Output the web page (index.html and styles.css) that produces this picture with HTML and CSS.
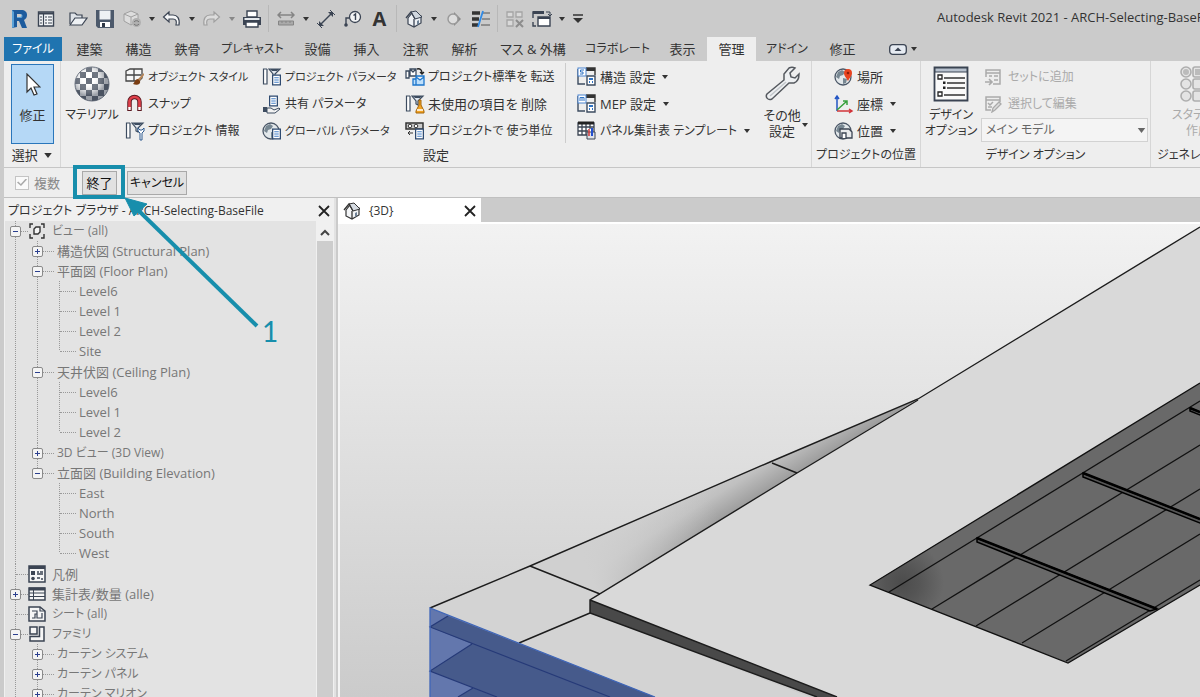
FILE: index.html
```html
<!DOCTYPE html>
<html lang="ja">
<head>
    <meta charset="UTF-8">
    <meta name="viewport" content="width=device-width, initial-scale=1.0">
    <title>Autodesk Revit 2021</title>
    <link rel="stylesheet" href="styles.css">
</head>
<body>
    <!-- shared icon shapes -->
    <svg class="sprite" width="0" height="0" aria-hidden="true">
        <symbol id="caret" viewBox="0 0 6 4"><path d="M0 0h6L3 4z" fill="currentColor"/></symbol>
        <symbol id="filter" viewBox="0 0 20 20">
            <path d="M5 2H1.500v15H5V2" fill="#fff" stroke="#3d4c60" stroke-width="1.200"/>
            <path d="M7 2h11l-5 5v4l-2-1V7z" fill="#dfe5ec" stroke="#3d4c60" stroke-width="1.200"/>
            <path d="M8 2h9l-2 2h-5z" fill="#3d4c60"/>
        </symbol>
        <symbol id="sheet" viewBox="0 0 10 12">
            <path d="M.7.7h8.600v10.600H.7z" fill="#fff" stroke="#2e4a70" stroke-width="1.400"/>
            <path d="M2.500 3.500h5M2.500 6h5M2.500 8.500h5" stroke="#2e6fc0"/>
        </symbol>
        <symbol id="globe" viewBox="0 0 20 20">
            <circle cx="9" cy="10" r="8" fill="#e3e8eb" stroke="#4a5666" stroke-width="1.300"/>
            <path d="M4 5l4-2 3 2-2 3-3 1-1 3-3-2zM9 11l4 1-1 4-3 1z" fill="#778792"/>
        </symbol>
        <symbol id="tmpl" viewBox="0 0 20 20">
            <path d="M1 2v15h7M1 8h8" fill="none" stroke="#3d4c60" stroke-width="1.400"/>
            <path d="M9 1h9v7" fill="none" stroke="#333" stroke-width="1.400"/>
            <path d="M9 1h9v3H9z" fill="#333"/>
            <rect x="1" y="1" width="8" height="8" fill="#fff" stroke="#4a84d0"/>
            <path d="M10 9h8v9h-8z" fill="#fff" stroke="#3d4c60" stroke-width="1.400"/>
            <path d="M12 12h4M12 15h1M15 15h1" stroke="#2e72c4" stroke-width="2"/>
        </symbol>
    </svg>

    <header class="titlebar">
        <div class="quick">
            <button class="qbtn" aria-label="Revit"><svg width="20" height="20" viewBox="0 0 20 20"><path fill="#1d5b9d" d="M3 1h9c4 0 6 2 6 5 0 2-1 4-3 5l3 8h-5l-3-7H8v6l-5 1z"/><path fill="#5ba2d8" d="M3 1l2 2v15l-2 1zM8 5h4c2 0 2 4 0 4H8z"/><path fill="#cbcbcb" d="M8 5h3c2 0 2 3 0 3H8z"/></svg></button>
            <button class="qbtn" aria-label="ホーム"><svg width="18" height="18" viewBox="0 0 18 18"><path d="M1.500 2h15v14h-15z" fill="#f4f6f8" stroke="#3b4453" stroke-width="1.400"/><path d="M2 3.500h14" stroke="#3b4453" stroke-width="2"/><path d="M6.500 4v12M3 7h2M3 10h2M3 13h2M8 7h2M8 10h2M8 13h2M11 7h4M11 10h4M11 13h4" stroke="#3b4453" stroke-width="1.200"/></svg></button>
            <button class="qbtn group" aria-label="開く"><svg width="20" height="18" viewBox="0 0 20 18"><path d="M2 14V3h5l2 2h5v3" fill="#dfe3e8" stroke="#3b4453" stroke-width="1.200"/><path d="M2 15l5-7h12l-5 7z" fill="#eef1f4" stroke="#3b4453" stroke-width="1.200"/></svg></button>
            <button class="qbtn" aria-label="保存"><svg width="20" height="20" viewBox="0 0 20 20"><path d="M1 1h18v18H3l-2-2z" fill="#4c596b"/><path d="M4.500 1.500h11v9h-11z" fill="#eef1f4"/><path d="M5 13h10v5H5z" fill="#fff"/><path d="M7 14h3v4H7z" fill="#2f3845"/></svg></button>
            <button class="qbtn" aria-label="同期"><svg width="20" height="20" viewBox="0 0 20 20"><g stroke="#a0a0a0" fill="#ddd"><path d="M2 5l7-3 7 3v7l-7 4-7-4z"/><path d="M2 5l7 3 7-3M9 8v8" fill="none"/></g><circle cx="14.500" cy="13.500" r="4.500" fill="#b0b0b0"/><path d="M12 13a3 3 0 0 1 5 0M17 15a3 3 0 0 1-5 0" stroke="#777" fill="none"/></svg></button>
            <button class="qdrop" aria-label="同期オプション"><svg width="6" height="4"><use href="#caret"/></svg></button>
            <button class="qbtn" aria-label="元に戻す"><svg width="19" height="18" viewBox="0 0 19 18"><path d="M7 2L1.500 7 7 12V9h4c3 0 4 2 3 6h3c1-7-2-10-6-10H7z" fill="#f6f7f8" stroke="#3b4453" stroke-width="1.200"/></svg></button>
            <button class="qdrop" aria-label="元に戻す履歴"><svg width="6" height="4"><use href="#caret"/></svg></button>
            <button class="qbtn" aria-label="やり直し"><svg width="19" height="18" viewBox="0 0 19 18"><path d="M12 2l5.500 5-5.500 5V9H8c-3 0-4 2-3 6H2C1 8 4 5 8 5h4z" fill="#dcdcdc" stroke="#a0a0a0" stroke-width="1.200"/></svg></button>
            <button class="qdrop dim" aria-label="やり直し履歴"><svg width="6" height="4"><use href="#caret"/></svg></button>
            <button class="qbtn" aria-label="印刷"><svg width="20" height="18" viewBox="0 0 20 18"><path d="M5 1h10v6H5z" fill="#fff" stroke="#3b4453" stroke-width="1.400"/><path d="M1 7h18v8H1z" fill="#3b4453"/><path d="M2.500 9h15" stroke="#e4e8ec" stroke-width="2"/><path d="M4 12h12v5H4z" fill="#fff" stroke="#3b4453" stroke-width="1.400"/></svg></button>
            <span class="qsep"></span>
            <button class="qbtn" aria-label="計測"><svg width="18" height="16" viewBox="0 0 18 16"><path d="M1 4h16M4 1L1 4l3 3M14 1l3 3-3 3" stroke="#858585" stroke-width="1.500" fill="none"/><path d="M1.500 10h15v4h-15zM5 10v2M9 10v2M13 10v2" stroke="#858585" fill="#aaa"/></svg></button>
            <button class="qdrop" aria-label="計測オプション"><svg width="6" height="4"><use href="#caret"/></svg></button>
            <button class="qbtn" aria-label="平行寸法"><svg width="20" height="20" viewBox="0 0 20 20"><path d="M4 16L16 4" stroke="#3b4453" stroke-width="1.400"/><path d="M3 12v5h5zM17 8V3h-5z" fill="#3b4453"/><path d="M1 14l5 5M14 1l5 5" stroke="#3b4453"/></svg></button>
            <button class="qbtn" aria-label="タグ"><svg width="20" height="18" viewBox="0 0 20 18"><circle cx="12" cy="7" r="5.500" fill="#f3f4f5" stroke="#3b4453" stroke-width="1.300"/><path d="M6.500 8H3v7M10.500 5.500L12.500 4v6" fill="none" stroke="#3b4453" stroke-width="1.400"/><circle cx="3" cy="15" r="1.800" fill="#3b4453"/></svg></button>
            <button class="qbtn qtext" aria-label="文字">A</button>
            <span class="qsep"></span>
            <button class="qbtn" aria-label="既定の3Dビュー"><svg width="18" height="18" viewBox="0 0 18 18"><path d="M3 8l4-5 9 3v7l-7 4-6-3z" fill="#eef1f5" stroke="#3b4453" stroke-width="1.200"/><path d="M6 2l5-1 6 6-7 2z" fill="#cfd6de" stroke="#3b4453"/><path d="M1 8l5-6 4 7M9 17V9" fill="none" stroke="#3b4453" stroke-width="1.300"/><path d="M12 11l2-1v4l-2 1z" fill="#6f8296"/></svg></button>
            <button class="qdrop" aria-label="3Dビューオプション"><svg width="6" height="4"><use href="#caret"/></svg></button>
            <button class="qbtn" aria-label="断面"><svg width="16" height="16" viewBox="0 0 16 16"><path d="M8 1l7 7-7 7z" fill="#8a8a8a"/><circle cx="7" cy="8" r="5" fill="#ddd" stroke="#999" stroke-width="1.400"/></svg></button>
            <button class="qbtn" aria-label="細線"><svg width="20" height="18" viewBox="0 0 20 18"><path d="M1 3h8M1 9h7M1 15h6" stroke="#333" stroke-width="3.500"/><path d="M12 3h7M11 9h8M10 15h9" stroke="#555"/><path d="M12 1L7 17" stroke="#2f8ae6" stroke-width="1.800"/></svg></button>
            <span class="qsep"></span>
            <button class="qbtn" aria-label="非アクティブを閉じる"><svg width="18" height="18" viewBox="0 0 18 18"><path d="M1 2h6v5H1zM10 2h6v5h-6zM1 10h6v6H1z" fill="#d9d9d9" stroke="#a5a5a5" stroke-width="1.300"/><path d="M10 10l7 7M17 10l-7 7" stroke="#8d8d8d" stroke-width="2"/></svg></button>
            <button class="qbtn" aria-label="ウィンドウを切り替え"><svg width="20" height="18" viewBox="0 0 20 18"><path d="M1 8V2h11M4 16H1v-4" fill="none" stroke="#3b4453" stroke-width="1.400"/><path d="M1 1h11v3H1z" fill="#3b4453"/><path d="M6 7h12v9H6z" fill="#fff" stroke="#3b4453" stroke-width="1.400"/><path d="M6 8h12" stroke="#3b4453" stroke-width="2"/><path d="M14 2h4v4M16 4l2 2 2-2" stroke="#3b4453" fill="none"/></svg></button>
            <button class="qdrop" aria-label="ウィンドウ一覧"><svg width="6" height="4"><use href="#caret"/></svg></button>
            <button class="qcustom" aria-label="カスタマイズ"><svg width="10" height="9" viewBox="0 0 10 9"><path d="M0 1h10" stroke="#333" stroke-width="1.500"/><path d="M0 4h10L5 9z" fill="#333"/></svg></button>
        </div>
        <div class="app-title">Autodesk Revit 2021 - ARCH-Selecting-BaseFile</div>
    </header>

    <nav class="tabs">
        <button class="tab file">ファイル</button>
        <button class="tab">建築</button>
        <button class="tab">構造</button>
        <button class="tab">鉄骨</button>
        <button class="tab wide">プレキャスト</button>
        <button class="tab">設備</button>
        <button class="tab">挿入</button>
        <button class="tab">注釈</button>
        <button class="tab">解析</button>
        <button class="tab wider">マス &amp; 外構</button>
        <button class="tab wide">コラボレート</button>
        <button class="tab">表示</button>
        <button class="tab active">管理</button>
        <button class="tab mid">アドイン</button>
        <button class="tab">修正</button>
        <button class="ribbon-toggle" aria-label="リボンを最小化">
            <svg width="18" height="11" viewBox="0 0 18 11"><rect x=".7" y=".7" width="16.600" height="9.600" rx="3" fill="#e6ebf2" stroke="#3b4453" stroke-width="1.300"/><path d="M5.500 7L9 3.500 12.500 7z" fill="#3b4453"/></svg>
            <svg width="6" height="4"><use href="#caret"/></svg>
        </button>
    </nav>

    <section class="ribbon">
        <div class="panel select-panel">
            <div class="panel-body">
                <button class="modify">
                    <svg width="16" height="24" viewBox="0 0 16 24"><path d="M2 1v18l4-4 3 7 3-1-3-7h6z" fill="#fff" stroke="#333" stroke-width="1.200"/></svg>
                    <span>修正</span>
                </button>
            </div>
            <div class="panel-title">選択 <svg width="8" height="5"><use href="#caret"/></svg></div>
        </div>

        <div class="panel settings-panel">
            <div class="panel-body settings-grid">
                <button class="big">
                    <svg width="36" height="36" viewBox="0 0 36 36">
                        <defs>
                            <pattern id="check" width="12" height="12" patternUnits="userSpaceOnUse"><path fill="#fff" d="M0 0h12v12H0z"/><path fill="#59616e" d="M0 0h6v6H0zM6 6h6v6H6z"/></pattern>
                            <radialGradient id="shade" cx=".4" cy=".35"><stop offset=".3" stop-color="#fff" stop-opacity=".1"/><stop offset="1" stop-color="#3b4453" stop-opacity=".5"/></radialGradient>
                        </defs>
                        <circle cx="18" cy="18" r="17" fill="url(#check)" stroke="#6b7380"/>
                        <circle cx="18" cy="18" r="17" fill="url(#shade)"/>
                    </svg>
                    <span>マテリアル</span>
                </button>
                <div class="stack">
                    <button class="cmd long"><svg width="20" height="20" viewBox="0 0 20 20"><path d="M1 4l4-2h12v9l-3 3H1zM1 8h15M9 2v12" fill="#f7f7f7" stroke="#444" stroke-width="1.300"/><path d="M19 6l-7 7 2 2 5-7z" fill="#b98555"/><path d="M13 12c-3 0-3 3-5 5 4 2 8 0 7-3z" fill="#7a3d12"/></svg>オブジェクト スタイル</button>
                    <button class="cmd"><svg width="20" height="20" viewBox="0 0 20 20"><path d="M4.500 17V8a5 5 0 0 1 10 0v9" fill="none" stroke="#5c1a22" stroke-width="4.500"/><path d="M4.500 14V8a5 5 0 0 1 10 0v6" fill="none" stroke="#e0404b" stroke-width="2.600"/><path d="M3.300 13h2.400v3H3.300zM13.300 13h2.400v3h-2.400z" fill="#fff"/></svg>スナップ</button>
                    <button class="cmd"><svg width="20" height="20" viewBox="0 0 20 20"><use href="#filter"/><path d="M15 19v-7l-2-2V7l2 2h2l2-2v3l-2 2v7z" fill="#fff" stroke="#2e5a8f"/></svg>プロジェクト 情報</button>
                </div>
                <div class="stack">
                    <button class="cmd long"><svg width="20" height="20" viewBox="0 0 20 20"><use href="#filter"/><use href="#sheet" x="10" y="7" width="9" height="12"/></svg>プロジェクト パラメータ</button>
                    <button class="cmd"><svg width="20" height="20" viewBox="0 0 20 20"><use href="#sheet" x="7" y="1" width="9" height="12"/><path d="M1 13h4v5H1z" fill="#3d4c60"/><path d="M5 14h4l3 2 5-2 1 1-5 4H5z" fill="#f3f3f3" stroke="#3d4c60"/></svg>共有 パラメータ</button>
                    <button class="cmd long"><svg width="20" height="20" viewBox="0 0 20 20"><use href="#globe"/><use href="#sheet" x="10" y="7" width="9" height="12"/></svg>グローバル パラメータ</button>
                </div>
                <div class="stack ruled">
                    <button class="cmd"><svg width="20" height="20" viewBox="0 0 20 20"><path d="M1 4h3v7H1zM5 2h6v7H5zM5 2l3 3 3-3" fill="#fff" stroke="#3d4c60" stroke-width="1.300"/><path d="M12 2c3-1 5 1 5 4M15 5l2 2 2-2" fill="none" stroke="#222" stroke-width="1.400"/><path d="M8 12h3v6H8zM11 9h8v9h-8zM11 10l4 3 4-3" fill="#bfe0fb" stroke="#1d76cc" stroke-width="1.300"/></svg>プロジェクト標準を 転送</button>
                    <button class="cmd kanji"><svg width="20" height="20" viewBox="0 0 20 20"><use href="#filter"/><path d="M14 6h2v5l3 6v2h-8v-2l3-6z" fill="#f2a324" stroke="#a5660b"/><path d="M12 16h6" stroke="#fff" stroke-width="1.500"/></svg>未使用の項目を 削除</button>
                    <button class="cmd"><svg width="20" height="20" viewBox="0 0 20 20"><path d="M1 2h17v6H1z" fill="#ccc" stroke="#333" stroke-width="1.500"/><circle cx="5" cy="5" r="1.800" fill="#fff" stroke="#333"/><circle cx="11" cy="5" r="1.800" fill="#fff" stroke="#333"/><path d="M3 12h5M5 10l-2 2 2 2" stroke="#333" fill="none"/><use href="#sheet" x="10" y="7" width="9" height="12"/></svg>プロジェクトで 使う単位</button>
                </div>
                <div class="stack setup">
                    <button class="cmd kanji"><svg width="20" height="20" viewBox="0 0 20 20"><use href="#tmpl"/><path d="M7 3H3.500v2H6v2H3" fill="none" stroke="#2e72c4"/></svg>構造 設定<svg class="more" width="6" height="4"><use href="#caret"/></svg></button>
                    <button class="cmd kanji"><svg width="20" height="20" viewBox="0 0 20 20"><use href="#tmpl"/><path d="M3 7V3.500h4V7M5 3.500V7" fill="none" stroke="#2e72c4"/></svg>MEP 設定<svg class="more" width="6" height="4"><use href="#caret"/></svg></button>
                    <button class="cmd"><svg width="20" height="20" viewBox="0 0 20 20"><path d="M1 2h16v12H1zM1 6h16M1 10h10M5 2v12M9 2v12M13 2v6" fill="#fff" stroke="#3b4453" stroke-width="1.300"/><path d="M1 2h16" stroke="#222" stroke-width="3"/><path d="M10 11h8v7h-8z" fill="#dfe3ea" stroke="#3b4453"/><path d="M12 15V8" stroke="#c33" stroke-width="1.500"/><path d="M15 15V7" stroke="#2350d0" stroke-width="2"/></svg>パネル集計表 テンプレート<svg class="more" width="6" height="4"><use href="#caret"/></svg></button>
                </div>
                <button class="big">
                    <svg width="36" height="36" viewBox="0 0 36 36"><path d="M20 14l0-6 5-6c2-1 4-1 6 0l-5 5 1 4 4 1 4-4c0 5-2 8-5 9l-5 0L8 33c-4 2-7-2-5-5z" fill="#eef0f2" stroke="#55595f" stroke-width="1.500"/><path d="M6 30L22 16" stroke="#c2c6ca" stroke-width="1.500"/></svg>
                    <span class="kanji">その他<br>設定</span>
                    <svg class="corner" width="6" height="4"><use href="#caret"/></svg>
                </button>
            </div>
            <div class="panel-title kanji">設定</div>
        </div>

        <div class="panel place-panel">
            <div class="panel-body">
                <div class="stack">
                    <button class="cmd kanji"><svg width="20" height="20" viewBox="0 0 20 20"><use href="#globe"/><path d="M14 14c-2-4-4-5-4-8a4 4 0 0 1 8 0c0 3-2 4-4 8z" fill="#e8431f"/><circle cx="14" cy="6" r="1.300" fill="#8d1c08"/></svg>場所</button>
                    <button class="cmd kanji"><svg width="20" height="20" viewBox="0 0 20 20"><path d="M3 17V3M1 5l2-3 2 3" stroke="#2255c4" stroke-width="1.500" fill="none"/><path d="M3 17h14M15 15l3 2-3 2" stroke="#d2343a" stroke-width="1.500" fill="none"/><path d="M3 16L13 7M9 7h4v4" stroke="#38a03c" stroke-width="1.500" fill="none"/></svg>座標<svg class="more" width="6" height="4"><use href="#caret"/></svg></button>
                    <button class="cmd kanji"><svg width="20" height="20" viewBox="0 0 20 20"><use href="#globe"/><path d="M6 17V8h9l3 3v6z" fill="#e8eaec" stroke="#3b4453" stroke-width="1.300"/><path d="M8 17v-5h4v5" fill="#fff" stroke="#3b4453" stroke-width="1.300"/></svg>位置<svg class="more" width="6" height="4"><use href="#caret"/></svg></button>
                </div>
            </div>
            <div class="panel-title">プロジェクトの位置</div>
        </div>

        <div class="panel design-panel">
            <div class="panel-body">
                <button class="big">
                    <svg width="36" height="36" viewBox="0 0 36 36"><path d="M1.500 1.500h33v33h-33z" fill="#fafafa" stroke="#3b4453" stroke-width="1.800"/><path d="M2 2h32v4H2z" fill="#b8c2cf" stroke="#3b4453"/><path d="M5 9h4v4H5zM5 26h4v4H5z" fill="#fff" stroke="#222" stroke-width="1.300"/><path d="M11 12h21M14 17h18M14 22h18M11 29h21" stroke="#333" stroke-width="1.400"/><path d="M10 15.500h2.500v2.500H10zM10 20.500h2.500v2.500H10z" fill="#222"/></svg>
                    <span>デザイン<br>オプション</span>
                </button>
                <div class="stack design-list">
                    <button class="cmd" disabled><svg width="18" height="18" viewBox="0 0 18 18"><path d="M2 9V2h14v14H9M2 5h14M5 8h3M10 8h4M10 12h4" fill="none" stroke="#aaa" stroke-width="1.500"/><path d="M1 14h6M5 11l3 3-3 3" fill="none" stroke="#aaa" stroke-width="1.600"/></svg>セットに追加</button>
                    <button class="cmd" disabled><svg width="18" height="18" viewBox="0 0 18 18"><path d="M7 15H2V2h14v5M2 5h14M4 8l2 2 3-3M4 12h4" fill="none" stroke="#aaa" stroke-width="1.500"/><path d="M8 17l1-4 6-6 2 2-6 6z" fill="#ddd" stroke="#aaa" stroke-width="1.300"/></svg>選択して編集</button>
                    <div class="combo">
                        <select aria-label="デザイン オプション"><option>メイン モデル</option></select>
                        <svg width="9" height="5"><use href="#caret"/></svg>
                    </div>
                </div>
            </div>
            <div class="panel-title">デザイン オプション</div>
        </div>

        <div class="panel gen-panel">
            <div class="panel-body">
                <button class="big" disabled>
                    <svg width="36" height="36" viewBox="0 0 36 36"><g fill="#e4e4e4" stroke="#aeaeae" stroke-width="1.600"><circle cx="6" cy="6" r="5"/><rect x="13" y="1" width="10" height="10" rx="2"/><circle cx="30" cy="6" r="5"/><circle cx="6" cy="18" r="5"/><rect x="13" y="13" width="10" height="10" rx="2"/><circle cx="30" cy="18" r="5"/><circle cx="6" cy="30" r="5"/><rect x="13" y="25" width="10" height="10" rx="2"/><circle cx="30" cy="30" r="5"/></g><circle cx="6" cy="6" r="3" fill="#bbb"/><path d="M15 3h6v6h-6z" fill="#bbb"/></svg>
                    <span>スタディの<br>作成</span>
                </button>
            </div>
            <div class="panel-title">ジェネレーティブ デザイン</div>
        </div>
    </section>

    <section class="options">
        <label class="multi"><input type="checkbox" checked disabled>複数</label>
        <button class="opt">終了</button>
        <button class="opt cancel">キャンセル</button>
        <!-- step callout for the finish button -->
        <svg class="callout" width="220" height="190" viewBox="0 0 220 190">
            <rect x="5" y="3" width="48" height="30" fill="none" stroke="#178eac" stroke-width="4"/>
            <path d="M69 47L187 162" stroke="#178eac" stroke-width="4"/>
            <path d="M55 34l9 18 13-12z" fill="#178eac" stroke="#178eac"/>
            <text x="192" y="178">1</text>
        </svg>
    </section>

    <main class="workspace">
        <aside class="browser">
            <div class="browser-head">
                <h2>プロジェクト ブラウザ - ARCH-Selecting-BaseFile</h2>
                <button class="close" aria-label="閉じる"><svg width="12" height="12" viewBox="0 0 12 12"><path d="M1 1l10 10M11 1L1 11" stroke="#222" stroke-width="1.800"/></svg></button>
            </div>
            <div class="browser-body">
                <ul class="tree">
                    <li>
                        <div class="row top kana"><button class="tg" aria-label="折りたたむ"></button><i></i><svg width="18" height="18" viewBox="0 0 18 18"><path d="M5 2H2v4M13 2h3v4M5 16H2v-4M13 16h3v-4" fill="none" stroke="#333" stroke-width="1.400"/><path d="M6 7l2-2h4v5l-2 2H6z" fill="#f6f6f6" stroke="#333" stroke-width="1.400"/></svg>ビュー (all)</div>
                        <ul>
                            <li><div class="row"><button class="tg plus" aria-label="展開"></button><i></i>構造伏図 (Structural Plan)</div></li>
                            <li>
                                <div class="row"><button class="tg" aria-label="折りたたむ"></button><i></i>平面図 (Floor Plan)</div>
                                <ul>
                                    <li><div class="row leaf"><i></i>Level6</div></li>
                                    <li><div class="row leaf"><i></i>Level 1</div></li>
                                    <li><div class="row leaf"><i></i>Level 2</div></li>
                                    <li class="last"><div class="row leaf"><i></i>Site</div></li>
                                </ul>
                            </li>
                            <li>
                                <div class="row"><button class="tg" aria-label="折りたたむ"></button><i></i>天井伏図 (Ceiling Plan)</div>
                                <ul>
                                    <li><div class="row leaf"><i></i>Level6</div></li>
                                    <li><div class="row leaf"><i></i>Level 1</div></li>
                                    <li class="last"><div class="row leaf"><i></i>Level 2</div></li>
                                </ul>
                            </li>
                            <li><div class="row kana"><button class="tg plus" aria-label="展開"></button><i></i>3D ビュー (3D View)</div></li>
                            <li class="last">
                                <div class="row"><button class="tg" aria-label="折りたたむ"></button><i></i>立面図 (Building Elevation)</div>
                                <ul>
                                    <li><div class="row leaf"><i></i>East</div></li>
                                    <li><div class="row leaf"><i></i>North</div></li>
                                    <li><div class="row leaf"><i></i>South</div></li>
                                    <li class="last"><div class="row leaf"><i></i>West</div></li>
                                </ul>
                            </li>
                        </ul>
                    </li>
                    <li><div class="row top leaf"><i></i><svg width="18" height="18" viewBox="0 0 18 18"><path d="M1 1h16v16H1z" fill="#f6f6f6" stroke="#3b4453" stroke-width="1.500"/><path d="M1 2.500h16" stroke="#3b4453" stroke-width="3"/><path d="M3 6h4v4H3z" fill="#3b4453"/><circle cx="5" cy="13.500" r="1.800" fill="#3b4453"/><path d="M9 7h2M12 7h3M9 9h6M9 13h3M13 14h2" stroke="#3b4453" stroke-width="1.300"/></svg>凡例</div></li>
                    <li><div class="row top"><button class="tg plus" aria-label="展開"></button><i></i><svg width="18" height="18" viewBox="0 0 18 18"><path d="M1 3h16v12H1z" fill="#f6f6f6" stroke="#3b4453" stroke-width="1.500"/><path d="M1 4h16" stroke="#3b4453" stroke-width="3"/><path d="M1 8h16M1 11.500h16M5.500 5v10" stroke="#3b4453"/></svg>集計表/数量 (alle)</div></li>
                    <li><div class="row top leaf kana"><i></i><svg width="18" height="18" viewBox="0 0 18 18"><path d="M1 2h11l5 4v10H1z" fill="#f6f6f6" stroke="#3b4453" stroke-width="1.500"/><path d="M12 2v4h5M4 6h5v3H7v4H4M9 9v4h5V8" fill="none" stroke="#3b4453" stroke-width="1.200"/></svg>シート (all)</div></li>
                    <li>
                        <div class="row top kana"><button class="tg" aria-label="折りたたむ"></button><i></i><svg width="18" height="18" viewBox="0 0 18 18"><path d="M2 2h7v7H2zM11.500 2H16v14H2v-4.500h9.500z" fill="#f6f6f6" stroke="#3b4453" stroke-width="1.500"/></svg>ファミリ</div>
                        <ul>
                            <li><div class="row kana"><button class="tg plus" aria-label="展開"></button><i></i>カーテン システム</div></li>
                            <li><div class="row kana"><button class="tg plus" aria-label="展開"></button><i></i>カーテン パネル</div></li>
                            <li><div class="row kana"><button class="tg plus" aria-label="展開"></button><i></i>カーテン マリオン</div></li>
                        </ul>
                    </li>
                </ul>
                <div class="scroll">
                    <button class="scroll-up" aria-label="上へ"><svg width="10" height="7" viewBox="0 0 10 7"><path d="M1 6l4-4 4 4" fill="none" stroke="#444" stroke-width="2"/></svg></button>
                    <div class="thumb"></div>
                </div>
            </div>
        </aside>

        <section class="view">
            <div class="doc-tabs">
                <div class="doc-tab">
                    <svg width="18" height="18" viewBox="0 0 18 18"><path d="M3 8l4-5 9 3v7l-7 4-6-3z" fill="#f3f5f7" stroke="#333" stroke-width="1.200"/><path d="M6 2l5-1 6 6-7 2z" fill="#d5dbe2" stroke="#333"/><path d="M1 8l5-6 4 7M9 17V9" fill="none" stroke="#333" stroke-width="1.300"/><path d="M12 11l2-1v4l-2 1z" fill="#6f8296"/></svg>
                    <span>{3D}</span>
                    <button class="close" aria-label="閉じる"><svg width="12" height="12" viewBox="0 0 12 12"><path d="M1 1l10 10M11 1L1 11" stroke="#222" stroke-width="1.800"/></svg></button>
                </div>
            </div>
            <svg class="model" viewBox="340 224 860 473" preserveAspectRatio="xMinYMin slice" role="img" aria-label="3D ビュー">
                <defs>
                    <linearGradient id="curve" gradientUnits="userSpaceOnUse" x1="645" y1="512" x2="669" y2="551">
                        <stop offset="0" stop-color="#cecece"/><stop offset=".5" stop-color="#c0c0c0"/><stop offset="1" stop-color="#9e9e9e"/>
                    </linearGradient>
                    <linearGradient id="fade" gradientUnits="userSpaceOnUse" x1="590" y1="575" x2="720" y2="520">
                        <stop offset="0" stop-color="#d0d0d0"/><stop offset="1" stop-color="#d0d0d0" stop-opacity="0"/>
                    </linearGradient>
                    <radialGradient id="pit" gradientUnits="userSpaceOnUse" cx="902" cy="583" r="42">
                        <stop offset="0" stop-color="#4c4c4c"/><stop offset=".4" stop-color="#555"/><stop offset="1" stop-color="#696969"/>
                    </radialGradient>
                </defs>
                <path d="M430 608L530 566L600 594L590 600V613L870 720H655z" fill="#d3d3d3"/>
                <path d="M530 566L770 462L918 399L797 473L600 594z" fill="url(#curve)"/>
                <path d="M530 566L770 462L918 399L797 473L600 594z" fill="url(#fade)"/>
                <path d="M590 600L918 400L1200 227V697H837z" fill="#d9d9d9"/>
                <path d="M590 600L837 697H817L590 613z" fill="#494949"/>
                <g fill="none" stroke="#1c1c1c" stroke-width="1.400">
                    <path d="M430 608L530 566L770 462L918 399L1200 227"/>
                    <path d="M918 400L797 473L590 600V613L817 697M590 600L837 697"/>
                    <path d="M530 566L600 594M772 463L797 473M519 643L590 613"/>
                </g>
                <path d="M430 608L655 697H430z" fill="#6377ad"/>
                <path d="M430 627L448 616L655 697H610L472 644zM430 671L472 644L610 697H497zM458 697L473 688L497 697z" fill="#465a8b"/>
                <path d="M448 616L430 627L610 697M472 644L430 671L497 697M473 688L458 697" fill="none" stroke="#263a78" stroke-width="1.200"/>
                <path d="M430 697V608L655 697" fill="none" stroke="#3f66b8" stroke-width="1.300"/>
                <path d="M870 585L1200 383V585L1068 663z" fill="#696969"/>
                <path d="M870 585L950 536V616z" fill="url(#pit)"/>
                <g fill="none" stroke="#111" stroke-width="1.300">
                    <path d="M1200 383L870 585L1068 663L1200 585M1066 661L1200 580"/>
                    <path d="M889 592L1200 401M932 609L1200 445M976 626L1200 489M1022 643L1200 534"/>
                </g>
                <g fill="#555" stroke="#000" stroke-width="1.500">
                    <path d="M977 542V538L1157 609L1150 611z"/>
                    <path d="M1083 477V473L1210 523V527z"/>
                    <path d="M1190 411V408L1210 416V419z"/>
                </g>
                <path d="M977 538L1157 609M1083 473L1200 519M1190 408L1200 412" stroke="#000" stroke-width="2.500"/>
            </svg>
        </section>
    </main>
</body>
</html>
```
FILE: styles.css
```css
* {
    box-sizing: border-box;
}
body {
    margin: 0;
    height: 100vh;
    overflow: hidden;
    display: flex;
    flex-direction: column;
    background: #cbcbcb;
    color: #333;
    font-family: "Open Sans", "Noto Sans CJK JP", sans-serif;
    font-size: 13px;
    line-height: 16px;
    font-feature-settings: "palt";
}
button, select {
    font: inherit;
    font-feature-settings: inherit;
    color: inherit;
    background: none;
    border: 0;
    padding: 0;
    margin: 0;
    white-space: nowrap;
}
svg {
    flex: none;
}
.sprite {
    position: absolute;
}

/* title bar */
.titlebar {
    display: flex;
    height: 37px;
    flex: none;
    padding-left: 5px;
    overflow: hidden;
}
.quick {
    display: flex;
    align-items: center;
    flex: none;
    width: 932px;
}
.qbtn, .qdrop, .qcustom {
    display: flex;
    align-items: center;
    justify-content: center;
    height: 27px;
    width: 27px;
}
.qdrop {
    width: 13px;
}
.qcustom {
    width: 20px;
}
.dim {
    color: #888;
}
.group {
    margin-left: 5px;
}
.qtext {
    font-size: 20px;
    font-weight: 700;
}
.qsep {
    width: 1px;
    height: 27px;
    margin: 0 3px;
    background: #b8b8b8;
}
.app-title {
    white-space: nowrap;
    padding-top: 9px;
}

/* ribbon tabs */
.tabs {
    display: flex;
    flex: none;
    height: 24px;
    padding-left: 4px;
}
.tab {
    flex: none;
    width: 49px;
}
.file {
    width: 58px;
    margin-right: 3px;
    background: #1f74b0;
    color: #fff;
    font-size: 12px;
}
.mid {
    width: 62px;
    font-size: 12px;
}
.wide {
    width: 81px;
    font-size: 12px;
}
.wider {
    width: 88px;
}
.active {
    background: #eee;
}
.ribbon-toggle {
    display: flex;
    align-items: center;
    gap: 4px;
    margin-left: 22px;
}

/* ribbon */
.ribbon {
    display: flex;
    flex: none;
    height: 107px;
    margin-left: 4px;
    background: #eee;
    border-bottom: 1px solid #c6c6c6;
    overflow: hidden;
    font-size: 12px;
}
.kanji {
    font-size: 13px;
}
.long {
    font-size: 11px;
}
.panel {
    flex: none;
    display: flex;
    flex-direction: column;
    border-right: 1px solid #d6d6d6;
}
.panel-body {
    display: flex;
    height: 83px;
    padding-top: 2px;
}
.panel-title {
    text-align: center;
    line-height: 22px;
    white-space: nowrap;
}
.select-panel {
    width: 57px;
    font-size: 13px;
}
.select-panel .panel-body {
    padding-left: 7px;
}
.modify {
    width: 43px;
    height: 80px;
    margin-top: 1px;
    display: flex;
    flex-direction: column;
    align-items: center;
    gap: 10px;
    padding-top: 8px;
    background: #b5d8f6;
    border: 1px solid #2a76bb;
}
.select-panel .panel-title svg {
    margin-left: 3px;
    vertical-align: 2px;
}
.settings-panel {
    width: 751px;
}
.settings-grid {
    display: grid;
    grid-template-columns: 60px 137px 143px 161px 189px 54px;
    padding-left: 4px;
}
.big {
    display: flex;
    flex-direction: column;
    align-items: center;
    gap: 5px;
    width: 54px;
    padding-top: 3px;
    position: relative;
}
.corner {
    position: absolute;
    right: 1px;
    top: 60px;
}
.cmd {
    display: flex;
    align-items: center;
    gap: 3px;
    height: 27px;
}
.more {
    margin-left: 4px;
}
.ruled {
    height: 80px;
    border-right: 1px solid #ccc;
}
.setup {
    padding-left: 11px;
}
.place-panel {
    width: 109px;
}
.place-panel .panel-body {
    padding-left: 22px;
}
.design-panel {
    width: 230px;
}
.design-panel .panel-body {
    padding-left: 3px;
    gap: 3px;
}
.design-list {
    width: 167px;
}
.design-list .cmd {
    padding-left: 3px;
    gap: 6px;
}
.cmd:disabled, .big:disabled {
    color: #aaa;
}
.combo {
    display: grid;
    align-items: center;
    padding-top: 1px;
    color: #666;
}
.combo select {
    grid-area: 1 / 1;
    appearance: none;
    height: 24px;
    padding-left: 4px;
    border: 1px solid #d2d2d2;
    background: #f4f4f4;
}
.combo svg {
    grid-area: 1 / 1;
    justify-self: end;
    margin-right: 2px;
    pointer-events: none;
}
.gen-panel {
    width: 150px;
}
.gen-panel .panel-body {
    padding-left: 20px;
}
.gen-panel .panel-title {
    text-align: left;
    padding-left: 6px;
}

/* option bar */
.options {
    display: flex;
    align-items: center;
    flex: none;
    height: 30px;
    margin-left: 4px;
    padding-left: 11px;
    background: #eee;
    border-bottom: 1px solid #c0c0c0;
    position: relative;
}
.multi {
    display: flex;
    align-items: center;
    gap: 5px;
    width: 67px;
    color: #888;
}
.multi input {
    appearance: none;
    display: grid;
    place-items: center;
    width: 14px;
    height: 14px;
    margin: 0;
    background: #fafafa;
    border: 1px solid #c4c4c4;
}
.multi input:checked::before {
    content: "";
    width: 10px;
    height: 8px;
    background: #aaa;
    clip-path: polygon(0 50%, 12% 38%, 38% 68%, 88% 0, 100% 12%, 40% 95%);
}
.opt {
    width: 35px;
    height: 24px;
    background: #e1e1e1;
    border: 1px solid #a9a9a9;
    color: #111;
}
.cancel {
    width: 60px;
    margin-left: 10px;
    font-size: 12px;
}
.callout {
    position: absolute;
    left: 66px;
    top: -4px;
    z-index: 2;
    pointer-events: none;
}
.callout text {
    font: 28px Lato, sans-serif;
    fill: #178eac;
}

/* project browser */
.workspace {
    flex: 1;
    min-height: 0;
    display: flex;
    margin-left: 4px;
}
.browser {
    flex: none;
    width: 332px;
    display: flex;
    flex-direction: column;
    background: #f0f0f0;
    border-right: 2px solid #e2e2e2;
}
.browser-head {
    display: flex;
    justify-content: space-between;
    align-items: center;
    flex: none;
    height: 23px;
    padding: 2px 4px 0;
}
.browser-head h2 {
    margin: 0;
    font-size: 12px;
    font-weight: 400;
    white-space: nowrap;
}
.close {
    display: flex;
    padding: 0;
}
.browser-body {
    flex: 1;
    min-height: 0;
    display: flex;
    overflow: hidden;
}
.tree, .tree ul {
    list-style: none;
    margin: 0;
    padding: 0;
}
.tree {
    flex: 1;
    margin-left: 1px;
    background: #e3e3e3;
    color: #777;
}
.tree ul {
    margin-left: 22px;
}
.tree ul ul {
    padding-bottom: 1px;
}
.tree li {
    background: repeating-linear-gradient(#999 0 1px, transparent 1px 2px) 10px 0 / 1px 100% no-repeat;
}
.tree li.last {
    background-size: 1px 10px;
}
.row {
    display: flex;
    align-items: center;
    height: 20px;
    padding-left: 5px;
    white-space: nowrap;
}
.kana {
    font-size: 12px;
}
.row i {
    width: 11px;
    margin-right: 3px;
    border-top: 1px dotted #999;
}
.row.leaf i {
    width: 16px;
    margin-left: 6px;
}
.row.top i {
    width: 7px;
    margin-right: 0;
}
.row.top.leaf i {
    width: 12px;
}
.row.top svg {
    margin-right: 6px;
}
.tg {
    width: 11px;
    height: 11px;
    border: 1px solid #8a8a8a;
    border-radius: 2px;
    background: linear-gradient(#2b3f8f, #2b3f8f) center / 5px 1px no-repeat #f4f4f4;
}
.tg.plus {
    background: linear-gradient(#2b3f8f, #2b3f8f) center / 5px 1px no-repeat, linear-gradient(#2b3f8f, #2b3f8f) center / 1px 5px no-repeat #f4f4f4;
}
.scroll {
    width: 18px;
    display: flex;
    flex-direction: column;
    padding: 0 1px;
}
.scroll-up {
    height: 20px;
}
.thumb {
    flex: 1;
    background: #cdcdcd;
}

/* 3D view */
.view {
    flex: 1;
    min-width: 0;
    display: flex;
    flex-direction: column;
    margin-left: 2px;
}
.doc-tabs {
    flex: none;
    height: 26px;
    border-bottom: 2px solid #fff;
}
.doc-tab {
    display: flex;
    align-items: center;
    gap: 8px;
    width: 143px;
    height: 24px;
    padding: 2px 5px 0;
    background: #fff;
    font-size: 12px;
}
.doc-tab .close {
    margin-left: auto;
}
.model {
    flex: 1;
    min-height: 0;
    width: 100%;
    border-left: 2px solid #f4f4f4;
    background: linear-gradient(#f2f2f2, #cbcbcb);
}
```
